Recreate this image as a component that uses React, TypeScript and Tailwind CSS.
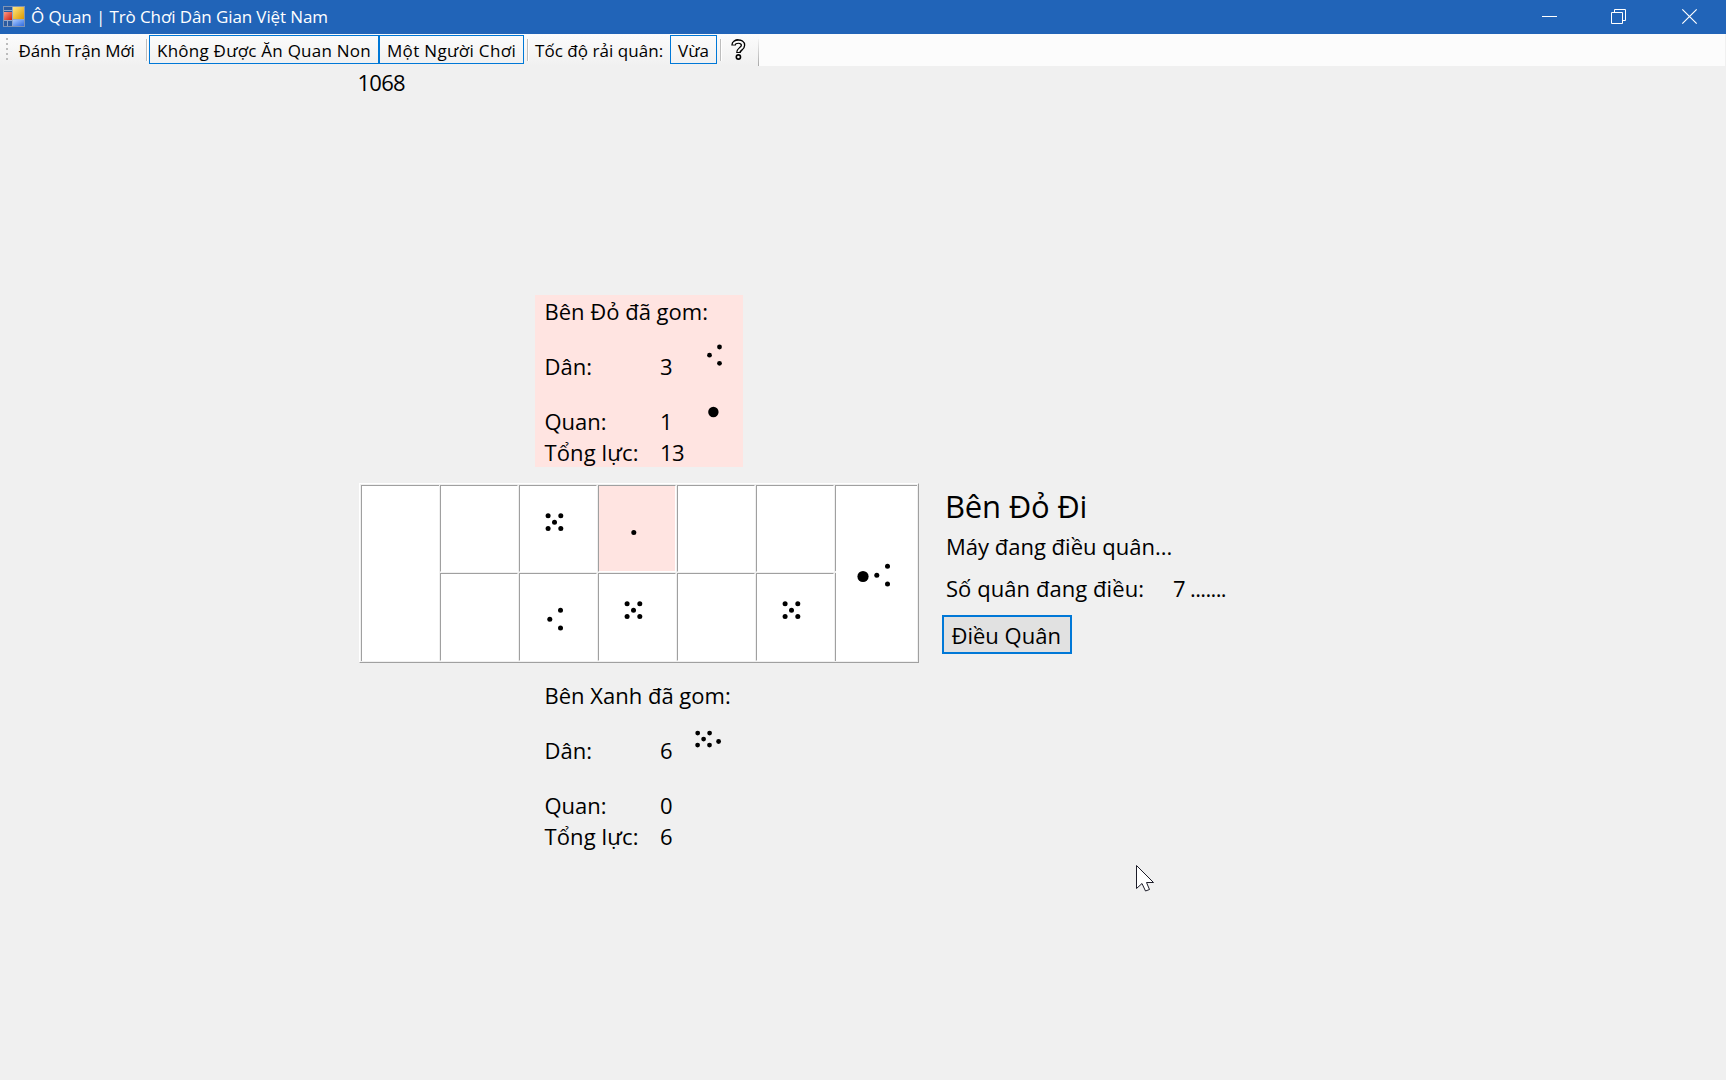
type Dot = [number, number, number];

const five: Dot[] = [
  [28.1, 29.7, 2.5],
  [40.8, 29.7, 2.5],
  [34.5, 36.2, 2.5],
  [28.1, 42.5, 2.5],
  [40.8, 42.5, 2.5],
];
const three: Dot[] = [
  [40.5, 36.3, 2.5],
  [29.8, 45.2, 2.5],
  [40.5, 54, 2.5],
];
const one: Dot[] = [[34.8, 46.5, 2.5]];
const bigCell: Dot[] = [
  [27, 90.5, 5.6],
  [40.8, 89.2, 2.5],
  [51.5, 80.3, 2.5],
  [51.5, 98, 2.5],
];

const topRow: { dots?: Dot[]; active?: boolean }[] = [{}, { dots: five }, { dots: one, active: true }, {}, {}];
const bottomRow: { dots?: Dot[]; active?: boolean }[] = [{}, { dots: three }, { dots: five }, {}, { dots: five }];

function Dots({ dots }: { dots: Dot[] }) {
  return (
    <svg className="block h-full w-full" aria-hidden="true">
      {dots.map(([x, y, r]) => (
        <circle key={`${x}-${y}`} cx={x} cy={y} r={r} fill="#000" />
      ))}
    </svg>
  );
}

function Cell({ dots, active }: { dots?: Dot[]; active?: boolean }) {
  return (
    <div
      className={`overflow-hidden border-t border-l border-r border-b border-t-[#a0a0a0] border-r-white border-b-white border-l-[#a0a0a0] ${
        active ? "bg-[#ffe4e1]" : "bg-white"
      }`}
    >
      {dots && <Dots dots={dots} />}
    </div>
  );
}

function Board() {
  return (
    <div className="h-[180px] w-[560px] border border-t-white border-r-[#a0a0a0] border-b-[#a0a0a0] border-l-white p-px">
      <div className="grid h-full grid-cols-[78px_78px_78px_78px_78px_78px_82px] grid-rows-[87px_88px] gap-px">
        <div className="row-span-2 border-t border-l border-[#a0a0a0] bg-white" />
        {topRow.map((c, i) => (
          <Cell key={i} {...c} />
        ))}
        <div className="relative row-span-2 border-t border-l border-[#a0a0a0] bg-white">
          <Dots dots={bigCell} />
          <span className="absolute top-[85px] -left-px h-0.5 w-px bg-[#f0f0f0]" />
        </div>
        {bottomRow.map((c, i) => (
          <Cell key={i} {...c} />
        ))}
      </div>
    </div>
  );
}

interface PanelProps {
  title: string;
  dan: number;
  quan: number;
  total: number;
  active?: boolean;
  dots: Dot[];
}

function Panel({ title, dan, quan, total, active, dots }: PanelProps) {
  return (
    <div className={`relative h-[172px] w-[208px] pl-[9.5px] text-[22px] leading-[30px] ${active ? "bg-[#ffe4e1]" : ""}`}>
      <div className="pt-px whitespace-nowrap">{title}</div>
      <div className="mt-[25px] grid grid-cols-[115.5px_1fr]">
        <span>Dân:</span>
        <span>{dan}</span>
      </div>
      <div className="mt-[25px] grid grid-cols-[115.5px_1fr]">
        <span>Quan:</span>
        <span>{quan}</span>
      </div>
      <div className="mt-px grid grid-cols-[115.5px_1fr]">
        <span className="tracking-[0.12px]">Tổng lực:</span>
        <span className="tracking-[-0.6px]">{total}</span>
      </div>
      <div className="absolute inset-0">
        <Dots dots={dots} />
      </div>
    </div>
  );
}

function AppIcon() {
  return (
    <svg className="ml-[3px] h-[21px] w-[22px]" viewBox="0 0 22 21" aria-hidden="true">
      <defs>
        <linearGradient id="gold" x1="0" y1="0" x2="1" y2="1">
          <stop offset="0" stopColor="#ffe680" />
          <stop offset="1" stopColor="#dc9a00" />
        </linearGradient>
        <linearGradient id="red" x1="0" y1="0" x2="1" y2="1">
          <stop offset="0" stopColor="#ff9a85" />
          <stop offset="1" stopColor="#c81c14" />
        </linearGradient>
        <linearGradient id="blue" x1="0" y1="0" x2="1" y2="1">
          <stop offset="0" stopColor="#a5c8ff" />
          <stop offset="1" stopColor="#2f6be0" />
        </linearGradient>
      </defs>
      <rect x="0.5" y="0.5" width="21" height="20" fill="#2a5ba0" stroke="#8094b4" />
      <path d="M1 4.5H9M1 14.5H9M4.5 15V20M9.5 1V20M10 13.5H21" stroke="#8fa8cc" fill="none" />
      <rect x="10" y="1" width="11" height="12" fill="url(#gold)" />
      <rect x="1" y="6" width="8" height="8" fill="url(#red)" />
      <rect x="10" y="14" width="11" height="6" fill="url(#blue)" />
    </svg>
  );
}

function Separator({ className }: { className: string }) {
  return <span className={`h-[22px] w-0.5 border-r border-l border-r-white border-l-[#bdbdbd] ${className}`} />;
}

export default function App() {
  return (
    <div className="relative flex h-[1080px] w-[1726px] flex-col overflow-hidden bg-[#f0f0f0] font-['Open_Sans','Noto_Sans',sans-serif] text-black">
      <header className="flex h-[34px] shrink-0 items-center bg-[#2164b8] pb-0.5 text-[17px] text-white">
        <AppIcon />
        <span className="relative top-px ml-[6px] tracking-[-0.1px]">Ô Quan | Trò Chơi Dân Gian Việt Nam</span>
        <svg className="mt-0.5 ml-auto h-[34px] w-[226px]" viewBox="0 0 226 34" fill="none" stroke="#fff" aria-hidden="true">
          <path d="M42 16.5H57" />
          <path d="M111.5 12.5H122.5V23.5H111.5Z" />
          <path d="M114.5 12V9.5H125.5V20.5H123" />
          <path d="M182.3 9.3L196.7 23.7M196.7 9.3L182.3 23.7" strokeWidth="1.2" />
        </svg>
      </header>

      <nav className="mr-px flex h-8 shrink-0 bg-[#fcfcfc] text-[17px] leading-[29px] whitespace-nowrap">
        <div className="flex h-full w-[759px] items-start bg-linear-to-b from-[#fcfcfc] to-[#f0f0f0]">
          <span className="mt-1 ml-1.5 grid gap-[3px]">
            {[0, 1, 2, 3, 4].map((i) => (
              <i key={i} className="h-0.5 w-0.5 bg-[#bcbcbc]" />
            ))}
          </span>
          <span className="mt-0.5 ml-[10.5px] w-[127.5px] tracking-[-0.1px]">Đánh Trận Mới</span>
          <Separator className="mt-[5px] mr-px" />
          <button className="mt-px h-[29px] w-[230px] border border-[#0078d7] text-center leading-[29px] tracking-[0.24px]">
            Không Được Ăn Quan Non
          </button>
          <button className="mt-px h-[29px] w-[145px] border border-[#0078d7] text-center leading-[29px] tracking-[0.35px]">
            Một Người Chơi
          </button>
          <Separator className="mt-[5px] ml-[3px]" />
          <span className="mt-0.5 ml-[6px] w-[135px] tracking-[0.05px]">Tốc độ rải quân:</span>
          <button className="mt-px h-[29px] w-[47px] border border-[#0078d7] text-center leading-[29px]">Vừa</button>
          <Separator className="mt-[5px] ml-[3px]" />
          <svg className="mt-[5px] ml-[9px] h-[22px] w-[15px]" viewBox="0 0 15 22" aria-hidden="true">
            <path d="M2.6 6.6V6C2.6 1.2 12 1.2 12 6.2C12 10 7.4 9.8 7.4 14" fill="none" stroke="#000" strokeWidth="4.6" />
            <circle cx="7.4" cy="18" r="2.9" fill="#000" />
            <path d="M2.6 5.6C3.2 1.9 12 1.4 12 6.2C12 10 7.4 9.8 7.4 13" fill="none" stroke="#fafafa" strokeWidth="2" />
            <circle cx="7.4" cy="18" r="1.3" fill="#fafafa" />
          </svg>
          <span className="mt-auto ml-auto h-[27px] w-px bg-linear-to-b from-[#f4f4f4] to-[#a8a8a8]" />
        </div>
      </nav>

      <main className="grid grid-cols-[560px_1fr] gap-x-[23px] pl-[359px] text-[22px] leading-[30px]">
        <section>
          <div className="-ml-[1.5px] pt-px tracking-[-0.75px]">1068</div>
          <div className="mt-[198px] ml-[176px]">
            <Panel
              title="Bên Đỏ đã gom:"
              dan={3}
              quan={1}
              total={13}
              active
              dots={[
                [184.5, 52, 2.4],
                [174.5, 60.2, 2.4],
                [184.5, 68.3, 2.4],
                [178.4, 117, 5.2],
              ]}
            />
          </div>
          <div className="mt-4">
            <Board />
          </div>
          <div className="mt-4 ml-[176px]">
            <Panel
              title="Bên Xanh đã gom:"
              dan={6}
              quan={0}
              total={6}
              dots={[
                [162.7, 54.1, 2.4],
                [174.6, 54.1, 2.4],
                [168.6, 60.1, 2.4],
                [162.6, 66.1, 2.4],
                [174.5, 66.1, 2.4],
                [183.6, 62.5, 2.4],
              ]}
            />
          </div>
        </section>

        <aside className="pt-[417px] whitespace-nowrap">
          <h1 className="ml-[3px] text-[31px] leading-[46px] tracking-[-0.2px]">Bên Đỏ Đi</h1>
          <p className="mt-0.5 ml-[4px]">Máy đang điều quân...</p>
          <p className="mt-3 ml-[4px] flex">
            <span className="w-[227px] tracking-[0.06px]">Số quân đang điều:</span>
            <span className="w-[17px]">7</span>
            <span className="tracking-[-0.65px]">.......</span>
          </p>
          <button className="mt-3 h-[39px] w-[130px] border-2 border-[#0078d7] bg-[#e1e1e1] text-left leading-[36px]">
            <span className="ml-[7.5px]">Điều Quân</span>
          </button>
        </aside>
      </main>

      <svg className="absolute top-[864px] left-[1135px] h-[30px] w-[22px]" viewBox="0 0 22 30" aria-hidden="true">
        <path d="M1.5 1.5V24.5L7 19.5L10.5 27L14.5 25.5L11.5 18.5H18.5Z" fill="#fff" stroke="#1c1c28" />
      </svg>
    </div>
  );
}
